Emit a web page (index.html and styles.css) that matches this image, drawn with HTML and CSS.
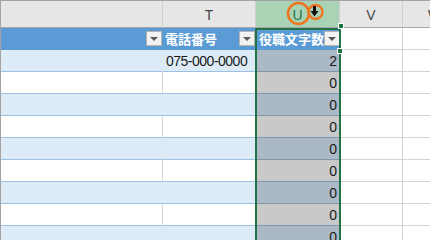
FILE: index.html
```html
<!DOCTYPE html>
<html lang="ja">
<head>
<meta charset="utf-8">
<link rel="stylesheet" href="styles.css">
</head>
<body>
<div class="sheet">
  <div class="grid">
    <div class="ch">&nbsp;</div>
    <div class="ch">T</div>
    <div class="ch ch-sel">U</div>
    <div class="ch">V</div>
    <div class="ch">W</div>

    <div class="th"><span></span><span class="dd"></span></div>
    <div class="th"><span>電話番号</span><span class="dd"></span></div>
    <div class="th th-u"><span>役職文字数</span><span class="dd"></span></div>
    <div class="c"></div>
    <div class="c"></div>

    <div class="t band"></div>
    <div class="t band txt">075-000-0000</div>
    <div class="u band">2</div>
    <div class="c"></div>
    <div class="c"></div>

    <div class="t"></div><div class="t"></div><div class="u">0</div><div class="c"></div><div class="c"></div>
    <div class="t band"></div><div class="t band"></div><div class="u band">0</div><div class="c"></div><div class="c"></div>
    <div class="t"></div><div class="t"></div><div class="u">0</div><div class="c"></div><div class="c"></div>
    <div class="t band"></div><div class="t band"></div><div class="u band">0</div><div class="c"></div><div class="c"></div>
    <div class="t"></div><div class="t"></div><div class="u">0</div><div class="c"></div><div class="c"></div>
    <div class="t band"></div><div class="t band"></div><div class="u band">0</div><div class="c"></div><div class="c"></div>
    <div class="t"></div><div class="t"></div><div class="u">0</div><div class="c"></div><div class="c"></div>
    <div class="t band"></div><div class="t band"></div><div class="u band">0</div><div class="c"></div><div class="c"></div>
  </div>

  <div class="selection"></div>
  <div class="handle handle-top"></div>
  <div class="handle handle-mid"></div>

  <svg class="marks" width="60" height="30" viewBox="280 0 60 30">
    <circle cx="298.5" cy="13.5" r="10.5" fill="none" stroke="#ee7623" stroke-width="2.6"/>
    <circle cx="315.5" cy="12" r="7" fill="none" stroke="#ee7623" stroke-width="2.4"/>
    <rect x="313" y="6" width="3" height="6" fill="#111"/>
    <polygon points="310.5,11 318.5,11 314.5,16.5" fill="#111"/>
  </svg>
</div>
</body>
</html>
```

FILE: styles.css
```css
* { box-sizing: border-box; }

html, body {
  margin: 0;
  padding: 0;
  background: #ffffff;
  overflow: hidden;
}

.sheet {
  position: relative;
  width: 430px;
  height: 240px;
  overflow: hidden;
  border-top: 1px solid #a3a3a3;
  border-left: 1px solid #a3a3a3;
}

.grid {
  display: grid;
  grid-template-columns: 162px 93px 84px 63px 64px;
  grid-template-rows: 27px 22px repeat(9, 22px);
}

.ch {
  background: #e6e6e6;
  border-right: 1px solid #cfcfcf;
  border-bottom: 1px solid #a6a6a6;
  font-family: "Liberation Sans", Arial, sans-serif;
  font-size: 14px;
  color: #444444;
  text-align: center;
  line-height: 28px;
}

.ch-sel {
  background: #a9d3b5;
  color: #217346;
}

.th {
  background: #5b9bd5;
  border-bottom: 1px solid #5b9bd5;
  border-right: 1px solid #5b9bd5;
  display: flex;
  align-items: center;
  justify-content: space-between;
  padding-left: 2px;
  color: #ffffff;
  font-family: "Noto Sans CJK JP", sans-serif;
  font-weight: bold;
  font-size: 13px;
  white-space: nowrap;
}

.th-u { padding-left: 3px; }

.dd {
  position: relative;
  width: 16px;
  height: 15px;
  background: #f3f3f3;
  border: 1px solid #b5b5b5;
  flex: none;
}

.dd::after {
  content: "";
  position: absolute;
  left: 3px;
  top: 5px;
  border-left: 4px solid transparent;
  border-right: 4px solid transparent;
  border-top: 4px solid #5a5a5a;
}

.t {
  background: #ffffff;
  border-right: 1px solid #d4d4d4;
  border-bottom: 1px solid #9bc2e6;
}

.t.band {
  background: #ddebf7;
  border-right-color: #ddebf7;
}

.txt {
  font-family: "Liberation Sans", Arial, sans-serif;
  font-size: 14px;
  letter-spacing: -0.5px;
  color: #1a1a1a;
  padding-left: 3px;
  line-height: 23px;
}

.u {
  background: #c9c9c9;
  border-right: 1px solid #c9c9c9;
  border-bottom: 1px solid #8496ab;
  font-family: "Liberation Sans", Arial, sans-serif;
  font-size: 14px;
  color: #1a1a1a;
  text-align: right;
  padding-right: 2px;
  line-height: 23px;
}

.u.band {
  background: #abb8c6;
}

.c {
  background: #ffffff;
  border-right: 1px solid #d4d4d4;
  border-bottom: 1px solid #d4d4d4;
}

.selection {
  position: absolute;
  left: 254px;
  top: 27px;
  width: 86px;
  height: 240px;
  border: 2px solid #217346;
}

.handle {
  position: absolute;
  width: 6px;
  height: 6px;
  background: #217346;
  border: 1px solid #ffffff;
}

.handle-top { left: 337px; top: 22px; }
.handle-mid { left: 336px; top: 47px; }

.marks {
  position: absolute;
  left: 279px;
  top: -1px;
}
```
